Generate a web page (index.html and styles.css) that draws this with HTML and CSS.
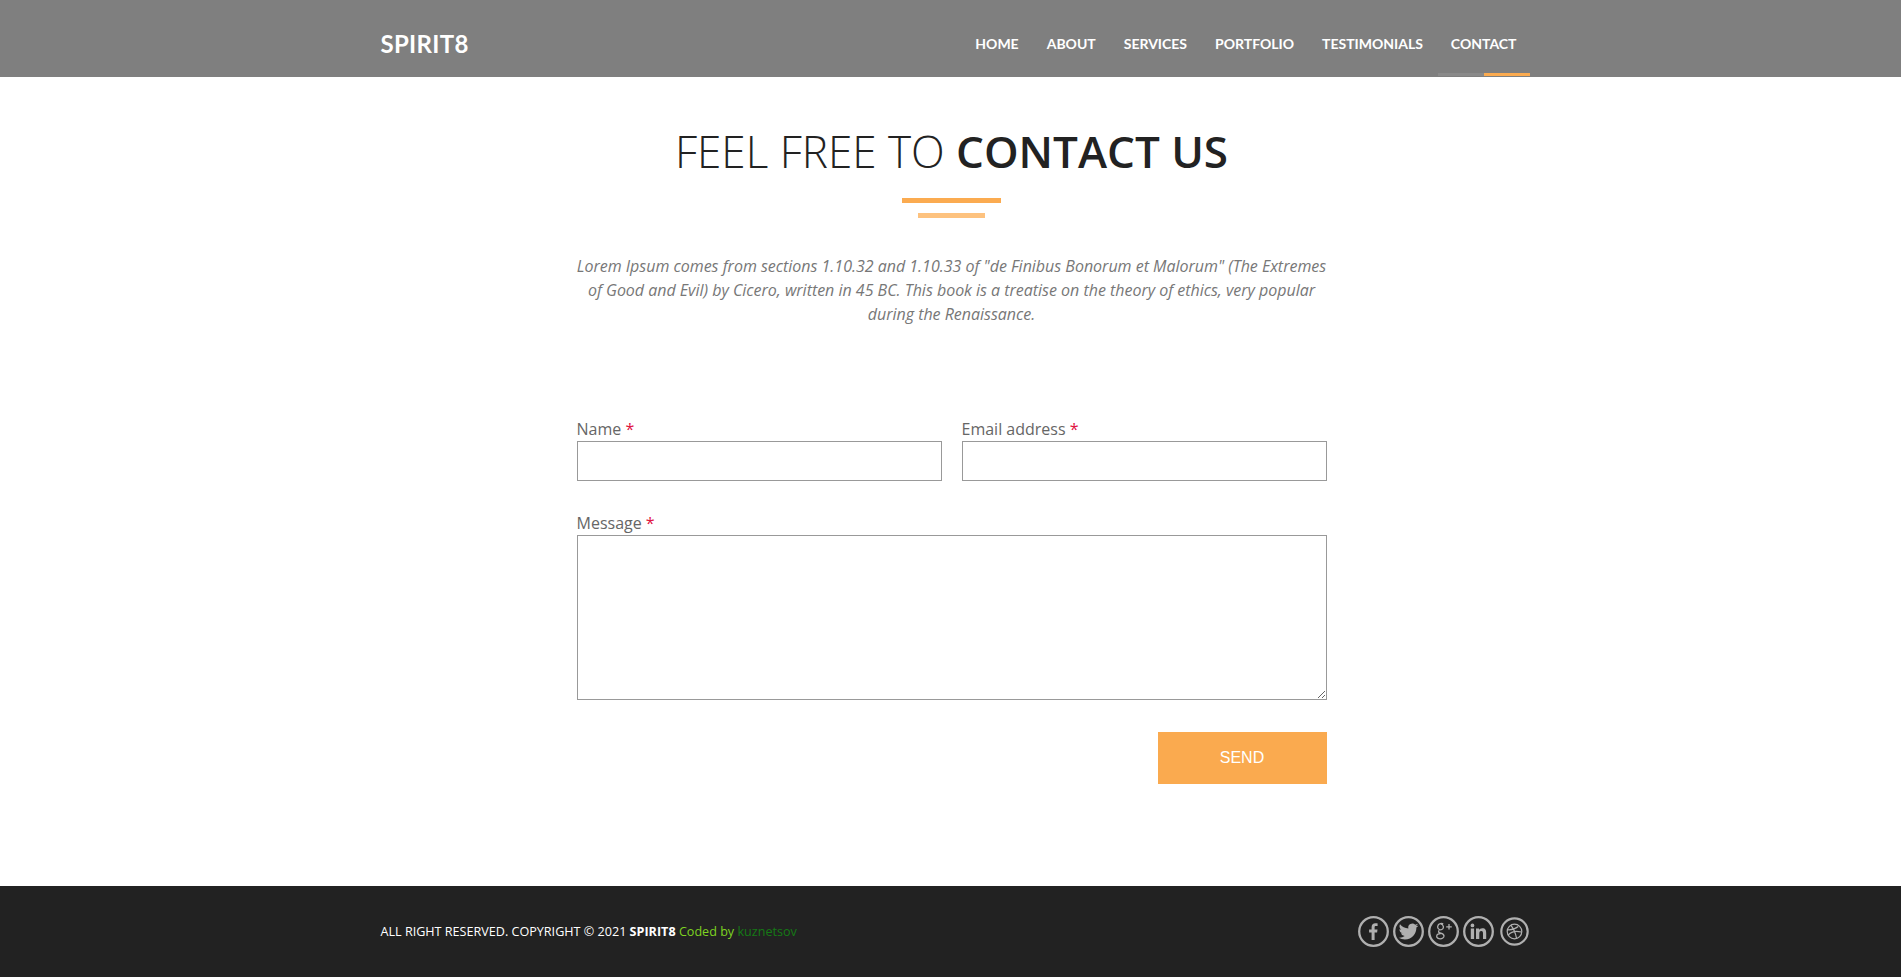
FILE: index.html
```html
<!DOCTYPE html>
<html lang="en">
<head>
  <meta charset="UTF-8">
  <meta name="viewport" content="width=device-width, initial-scale=1.0">
  <title>Spirit8 - Contact</title>
  <link rel="stylesheet" href="styles.css">
</head>
<body>
  <header class="topbar">
    <div class="container topbar-inner">
      <a class="logo" href="#">SPIRIT8</a>
      <ul class="nav">
        <li><a href="#">Home</a></li>
        <li><a href="#">About</a></li>
        <li><a href="#">Services</a></li>
        <li><a href="#">Portfolio</a></li>
        <li><a href="#">Testimonials</a></li>
        <li class="active"><a href="#">Contact</a></li>
      </ul>
    </div>
  </header>

  <section class="contact">
    <h2 class="title">Feel free to <strong>contact us</strong></h2>
    <div class="bar"></div>
    <div class="bar bar-small"></div>
    <p class="lead">Lorem Ipsum comes from sections 1.10.32 and 1.10.33 of "de Finibus Bonorum et Malorum" (The Extremes of Good and Evil) by Cicero, written in 45 BC. This book is a treatise on the theory of ethics, very popular during the Renaissance.</p>

    <form class="form">
      <div class="form-row">
        <div class="field">
          <label for="name">Name <span class="req">*</span></label>
          <input id="name" type="text">
        </div>
        <div class="field">
          <label for="email">Email address <span class="req">*</span></label>
          <input id="email" type="email">
        </div>
      </div>
      <div class="field">
        <label for="message">Message <span class="req">*</span></label>
        <textarea id="message"></textarea>
      </div>
      <div class="form-actions">
        <button type="button" class="send">SEND</button>
      </div>
    </form>
  </section>

  <footer class="footer">
    <div class="container footer-inner">
      <p class="copy">ALL RIGHT RESERVED. COPYRIGHT © 2021 <strong>SPIRIT8</strong> <span class="coded">Coded by</span> <a href="#">kuznetsov</a></p>
      <div class="social">
        <a href="#" class="social-link">
          <svg viewBox="0 0 31 31"><circle cx="15.5" cy="15.5" r="14.3"/><path class="solid" d="M16.6 24v-7.600h2.500l.4-3h-2.900v-1.900c0-.9.3-1.400 1.400-1.400h1.600V7.400c-.3 0-1.200-.1-2.300-.1-2.200 0-3.700 1.400-3.700 3.900v2.200h-2.500v3h2.500V24z"/></svg>
        </a>
        <a href="#" class="social-link">
          <svg viewBox="0 0 31 31"><circle cx="15.5" cy="15.5" r="14.3"/><path class="solid" transform="translate(5.7 5.7) scale(.82)" d="M23.953 4.57a10 10 0 01-2.825.775 4.958 4.958 0 002.163-2.723c-.951.555-2.005.959-3.127 1.184a4.92 4.92 0 00-8.384 4.482C7.69 8.095 4.067 6.13 1.64 3.162a4.822 4.822 0 00-.666 2.475c0 1.71.87 3.213 2.188 4.096a4.904 4.904 0 01-2.228-.616v.06a4.923 4.923 0 003.946 4.827 4.996 4.996 0 01-2.212.085 4.936 4.936 0 004.604 3.417 9.867 9.867 0 01-6.102 2.105c-.39 0-.779-.023-1.17-.067a13.995 13.995 0 007.557 2.209c9.053 0 13.998-7.496 13.998-13.985 0-.21 0-.42-.015-.63A9.935 9.935 0 0024 4.59z"/></svg>
        </a>
        <a href="#" class="social-link">
          <svg viewBox="0 0 31 31"><circle cx="15.5" cy="15.5" r="14.3"/><path class="line" d="M15.2 7.800c-1-.5-5-.6-5.500 2.500-.3 2.200 1.400 3.500 2.900 3.500 1.700 0 3-1.300 2.800-3.200-.2-1.600-1.300-2.500-2.700-2.800M11.300 14.300c-1 .9-.9 2 0 2.400 1.600.8 4.500.8 4.700 3.200.1 1.900-2 2.900-3.700 2.900-1.800 0-3.700-.9-3.600-2.600.1-1.600 2-2.600 4-2.600M21 8v5.600M18.200 10.800h5.600"/></svg>
        </a>
        <a href="#" class="social-link">
          <svg viewBox="0 0 31 31"><circle cx="15.5" cy="15.5" r="14.3"/><path class="solid" d="M7.800 12.600h3.300V23H7.800zM9.450 7.500a1.900 1.900 0 110 3.800 1.900 1.900 0 010-3.800zM13 12.600h3.100V14c.5-.9 1.600-1.700 3.200-1.700 3.300 0 3.900 2.100 3.900 4.900V23H20v-5.100c0-1.200 0-2.800-1.700-2.800s-2 1.300-2 2.700V23H13z"/></svg>
        </a>
        <a href="#" class="social-link social-small">
          <svg viewBox="0 0 31 31"><circle cx="15.5" cy="15.5" r="14.1"/><g class="line"><circle cx="15.5" cy="15.5" r="7.800"/><path d="M11.500 8.800c2.700 3.300 5 8.200 6.200 14M8 13.600c3.500.3 7.400-.1 11.500-3.400M8.800 19.500c2.500-3.300 6.500-5.300 13.900-3.500"/></g></svg>
        </a>
      </div>
    </div>
  </footer>
</body>
</html>
```

FILE: styles.css
```css
* {
  box-sizing: border-box;
}
body {
  margin: 0;
  font-family: "Open Sans", sans-serif;
  background: #fff;
  color: #666;
}
a {
  text-decoration: none;
}
.container {
  width: 1170px;
  margin: 0 auto;
  padding: 0 15px;
}

/* top bar */
.topbar {
  height: 77px;
  background: #7f7f7f;
}
.topbar-inner {
  display: flex;
  justify-content: space-between;
  height: 100%;
  padding-right: 5px;
}
.logo {
  font-family: Lato, sans-serif;
  font-weight: 700;
  font-size: 24px;
  letter-spacing: .3px;
  line-height: 87px;
  color: #fff;
}
.nav {
  display: flex;
  list-style: none;
  margin: 0;
  padding: 0;
}
.nav li a {
  display: block;
  height: 77px;
  padding: 0 14px;
  font-family: Lato, sans-serif;
  font-weight: 700;
  font-size: 14px;
  line-height: 87px;
  text-transform: uppercase;
  color: #fff;
}
.nav li.active a {
  background: linear-gradient(to right, #8a8a8a 50%, #fbab50 50%) no-repeat 50% 73px / 92px 3px;
}

/* contact form section */
.contact {
  width: 752px;
  margin: 0 auto;
  padding: 49px 0 102px 2px;
  text-align: center;
}
.title {
  margin: 0;
  font-size: 44px;
  font-weight: 300;
  line-height: 50px;
  text-transform: uppercase;
  color: #222;
}
.title strong {
  font-weight: 600;
}
.bar {
  width: 99px;
  height: 5px;
  margin: 22px auto 0;
  background: #fbab50;
}
.bar-small {
  width: 67px;
  margin-top: 10px;
  background: #fdc27f;
}
.lead {
  margin: 36px 0 0;
  font-size: 16px;
  font-style: italic;
  line-height: 24px;
  letter-spacing: -.015px;
  color: #777;
}
.form {
  margin-top: 91px;
  text-align: left;
}
.form-row {
  display: flex;
  gap: 20px;
  margin-bottom: 30px;
}
.field {
  flex: 1;
}
.field label {
  display: block;
  font-size: 16px;
  line-height: 24px;
  color: #666;
}
.req {
  color: #e0103f;
}
.field input,
.field textarea {
  display: block;
  width: 100%;
  border: 1px solid #999;
  border-radius: 0;
  background: #fff;
  outline: none;
}
.field input {
  height: 40px;
}
.field textarea {
  height: 165px;
}
.form-actions {
  display: flex;
  justify-content: flex-end;
  margin-top: 32px;
}
.send {
  width: 169px;
  height: 52px;
  border: none;
  background: #faaa4f;
  font-family: "Liberation Sans", Arial, sans-serif;
  font-size: 16px;
  color: #fff;
}

/* footer */
.footer {
  height: 91px;
  background: #222;
}
.footer-inner {
  display: flex;
  justify-content: space-between;
  align-items: center;
  height: 100%;
  padding-right: 7px;
}
.copy {
  margin: 0;
  font-size: 12.6px;
  color: #fff;
}
.coded {
  color: #7ed321;
}
.copy a {
  color: #157a15;
}
.social {
  display: flex;
  align-items: center;
  gap: 4px;
}
.social-link {
  display: block;
  width: 31px;
  height: 31px;
}
.social-small {
  width: 29px;
  height: 29px;
  margin-left: 2px;
}
.social-link svg {
  display: block;
  width: 100%;
  height: 100%;
  fill: none;
  stroke: #b0b0b0;
  stroke-width: 2.3;
}
.social-link .solid {
  fill: #b0b0b0;
  stroke: none;
}
.social-link .line {
  stroke-width: 1.3;
}
```
